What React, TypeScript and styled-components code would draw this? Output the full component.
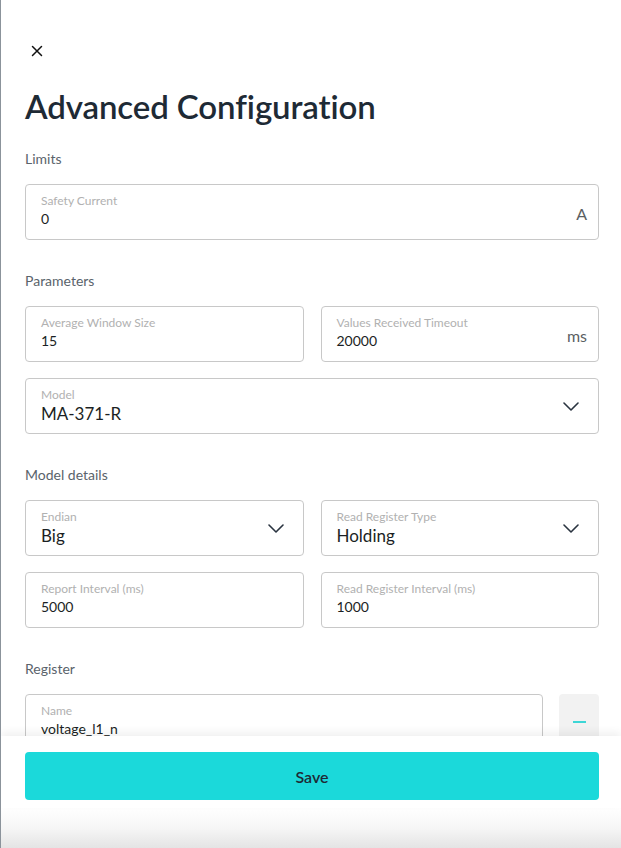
import React from "react";
import styled, { createGlobalStyle } from "styled-components";

const GlobalStyle = createGlobalStyle`
  html, body {
    margin: 0;
    padding: 0;
    background: #ffffff;
  }
  body {
    font-family: Lato, "Noto Sans", "Liberation Sans", sans-serif;
    color: #1f2a33;
  }
  * { box-sizing: border-box; }
`;

const Drawer = styled.div`
  width: 621px;
  height: 848px;
  border-left: 1px solid #8b939b;
  display: flex;
  flex-direction: column;
  overflow: hidden;
  background: #fff;
`;

const Body = styled.div`
  flex: 1;
  overflow: hidden;
  padding: 44px 22px 0 24px;
`;

const CloseButton = styled.button`
  border: none;
  background: none;
  padding: 0;
  margin-left: 5px;
  width: 14px;
  height: 14px;
  display: flex;
  cursor: pointer;
`;

const Title = styled.h1`
  margin: 26px 0 3px;
  font-size: 33px;
  font-weight: 600;
  letter-spacing: -0.1px;
  color: #1e2a35;
  line-height: 44px;
`;

const SectionTitle = styled.div`
  margin: 32px 0 16px;
  font-size: 14px;
  color: #5a636b;
  line-height: 18px;
`;

const FirstSection = styled(SectionTitle)`
  margin-top: 22px;
`;

const Row = styled.div<{ $cols?: number }>`
  display: grid;
  grid-template-columns: repeat(${(p) => p.$cols ?? 1}, 1fr);
  gap: 17px;
  margin-bottom: 16px;
`;

const FieldBox = styled.div`
  height: 56px;
  border: 1px solid #c8c8c8;
  border-radius: 4px;
  padding: 9px 15px 0 15px;
  display: flex;
  align-items: flex-start;
`;

const FieldText = styled.div`
  flex: 1;
  min-width: 0;
`;

const Label = styled.div`
  font-size: 12px;
  line-height: 14px;
  color: #b1b1b1;
`;

const Value = styled.div<{ $big?: boolean }>`
  font-size: ${(p) => (p.$big ? "17px" : "14px")};
  line-height: ${(p) => (p.$big ? "22px" : "18px")};
  margin-top: ${(p) => (p.$big ? "1px" : "2px")};
  color: #1b1f24;
`;

const Unit = styled.div`
  font-size: 16px;
  color: #5b5f63;
  margin-top: 10px;
  margin-right: -4px;
`;

const Chevron = styled.svg`
  margin-top: 14px;
  margin-right: 4px;
`;

const RegisterRow = styled.div`
  display: grid;
  grid-template-columns: 1fr 40px;
  gap: 16px;
`;

const RemoveButton = styled.button`
  height: 56px;
  border: none;
  border-radius: 4px;
  background: #f2f2f2;
  display: flex;
  align-items: center;
  justify-content: center;
  padding: 0;
`;

const Dash = styled.span`
  width: 13px;
  height: 2px;
  background: #3dd6d6;
`;

const Footer = styled.div`
  padding: 16px 22px 8px 24px;
  background: #fff;
  box-shadow: 0 -4px 8px rgba(0, 0, 0, 0.06);
  position: relative;
`;

const SaveButton = styled.button`
  width: 100%;
  height: 48px;
  border: none;
  border-radius: 4px;
  background: #1bd9da;
  color: #1e2a35;
  font-family: inherit;
  font-size: 16px;
  font-weight: 600;
  cursor: pointer;
`;

const BottomShade = styled.div`
  height: 40px;
  background: linear-gradient(to bottom, #ffffff 0%, #f6f6f6 50%, #e4e4e4 100%);
`;

const ChevronIcon = () => (
  <Chevron width="16" height="9" viewBox="0 0 16 9" fill="none">
    <path d="M1 1 L8 8 L15 1" stroke="#2a3440" strokeWidth="1.6" strokeLinecap="round" strokeLinejoin="round" />
  </Chevron>
);

const Field = ({ label, value, unit }: { label: string; value: string; unit?: string }) => (
  <FieldBox>
    <FieldText>
      <Label>{label}</Label>
      <Value>{value}</Value>
    </FieldText>
    {unit && <Unit>{unit}</Unit>}
  </FieldBox>
);

const SelectField = ({ label, value }: { label: string; value: string }) => (
  <FieldBox>
    <FieldText>
      <Label>{label}</Label>
      <Value $big>{value}</Value>
    </FieldText>
    <ChevronIcon />
  </FieldBox>
);

export default function App() {
  return (
    <>
      <GlobalStyle />
      <Drawer>
        <Body>
          <CloseButton aria-label="close">
            <svg width="14" height="14" viewBox="0 0 14 14">
              <path d="M2.5 2.5 L11.5 11.5 M11.5 2.5 L2.5 11.5" stroke="#111" strokeWidth="1.5" strokeLinecap="round" />
            </svg>
          </CloseButton>
          <Title>Advanced Configuration</Title>

          <FirstSection>Limits</FirstSection>
          <Row>
            <Field label="Safety Current" value="0" unit="A" />
          </Row>

          <SectionTitle>Parameters</SectionTitle>
          <Row $cols={2}>
            <Field label="Average Window Size" value="15" />
            <Field label="Values Received Timeout" value="20000" unit="ms" />
          </Row>
          <Row>
            <SelectField label="Model" value="MA-371-R" />
          </Row>

          <SectionTitle>Model details</SectionTitle>
          <Row $cols={2}>
            <SelectField label="Endian" value="Big" />
            <SelectField label="Read Register Type" value="Holding" />
          </Row>
          <Row $cols={2}>
            <Field label="Report Interval (ms)" value="5000" />
            <Field label="Read Register Interval (ms)" value="1000" />
          </Row>

          <SectionTitle>Register</SectionTitle>
          <RegisterRow>
            <Field label="Name" value="voltage_l1_n" />
            <RemoveButton aria-label="remove">
              <Dash />
            </RemoveButton>
          </RegisterRow>
        </Body>
        <Footer>
          <SaveButton>Save</SaveButton>
        </Footer>
        <BottomShade />
      </Drawer>
    </>
  );
}
